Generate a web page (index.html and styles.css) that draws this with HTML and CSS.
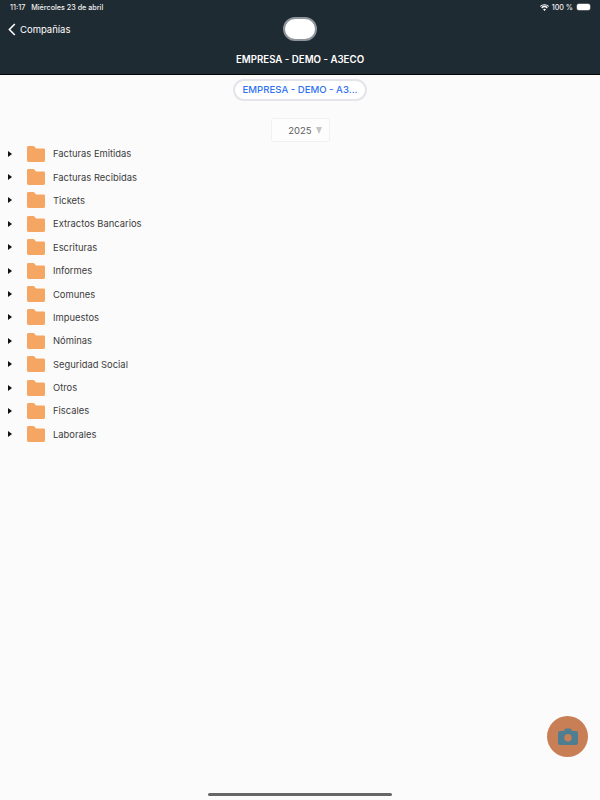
FILE: index.html
```html
<!DOCTYPE html>
<html lang="es">
<head>
    <meta charset="UTF-8">
    <meta name="viewport" content="width=device-width, initial-scale=1.0">
    <title>Compañías</title>
    <link rel="stylesheet" href="styles.css">
</head>
<body>
    <header class="topbar">
        <div class="status-bar">
            <span class="status-time">11:17</span>
            <span class="status-date">Miércoles 23 de abril</span>
            <span class="status-right">
                <svg class="wifi" width="9" height="7" viewBox="0 0 18 14"><path d="M9 14 L6 10.6 A4.6 4.6 0 0 1 12 10.6 Z M4.4 8.8 L2.5 6.7 A9.6 9.6 0 0 1 15.5 6.7 L13.6 8.8 A6.8 6.8 0 0 0 4.4 8.8 Z M1.3 5.4 L0 3.8 A13.4 13.4 0 0 1 18 3.8 L16.7 5.4 A11.4 11.4 0 0 0 1.3 5.4 Z" fill="#fff"/></svg>
                <span>100 %</span>
                <span class="battery"></span>
            </span>
        </div>
        <div class="nav-row">
            <a class="back-link">
                <svg width="8" height="13" viewBox="0 0 8 13"><path d="M6.8 1 L1.4 6.5 L6.8 12" fill="none" stroke="#fff" stroke-width="1.6"/></svg>
                <span>Compañías</span>
            </a>
            <div class="logo-pill"></div>
        </div>
        <h1 class="company-title">EMPRESA - DEMO - A3ECO</h1>
    </header>

    <main class="content">
        <div class="company-pill">EMPRESA - DEMO - A3...</div>
        <div class="year-select">
            <span>2025</span>
            <span class="year-arrow"></span>
        </div>
        <ul class="folder-list">
            <li class="folder-row"><span class="caret"></span><svg class="folder" viewBox="0 0 18 16"><use href="#folder-icon"/></svg><span>Facturas Emitidas</span></li>
            <li class="folder-row"><span class="caret"></span><svg class="folder" viewBox="0 0 18 16"><use href="#folder-icon"/></svg><span>Facturas Recibidas</span></li>
            <li class="folder-row"><span class="caret"></span><svg class="folder" viewBox="0 0 18 16"><use href="#folder-icon"/></svg><span>Tickets</span></li>
            <li class="folder-row"><span class="caret"></span><svg class="folder" viewBox="0 0 18 16"><use href="#folder-icon"/></svg><span>Extractos Bancarios</span></li>
            <li class="folder-row"><span class="caret"></span><svg class="folder" viewBox="0 0 18 16"><use href="#folder-icon"/></svg><span>Escrituras</span></li>
            <li class="folder-row"><span class="caret"></span><svg class="folder" viewBox="0 0 18 16"><use href="#folder-icon"/></svg><span>Informes</span></li>
            <li class="folder-row"><span class="caret"></span><svg class="folder" viewBox="0 0 18 16"><use href="#folder-icon"/></svg><span>Comunes</span></li>
            <li class="folder-row"><span class="caret"></span><svg class="folder" viewBox="0 0 18 16"><use href="#folder-icon"/></svg><span>Impuestos</span></li>
            <li class="folder-row"><span class="caret"></span><svg class="folder" viewBox="0 0 18 16"><use href="#folder-icon"/></svg><span>Nóminas</span></li>
            <li class="folder-row"><span class="caret"></span><svg class="folder" viewBox="0 0 18 16"><use href="#folder-icon"/></svg><span>Seguridad Social</span></li>
            <li class="folder-row"><span class="caret"></span><svg class="folder" viewBox="0 0 18 16"><use href="#folder-icon"/></svg><span>Otros</span></li>
            <li class="folder-row"><span class="caret"></span><svg class="folder" viewBox="0 0 18 16"><use href="#folder-icon"/></svg><span>Fiscales</span></li>
            <li class="folder-row"><span class="caret"></span><svg class="folder" viewBox="0 0 18 16"><use href="#folder-icon"/></svg><span>Laborales</span></li>
        </ul>
    </main>

    <button class="camera-fab">
        <svg width="20" height="17" viewBox="0 0 20 17"><path d="M2 3 H6 L7 0.8 Q7.2 0.4 7.8 0.4 H12.2 Q12.8 0.4 13 0.8 L14 3 H18 Q20 3 20 5 V15 Q20 17 18 17 H2 Q0 17 0 15 V5 Q0 3 2 3 Z" fill="#4f7d92"/><circle cx="10" cy="9.8" r="3.7" fill="#c97f55"/></svg>
    </button>
    <div class="home-indicator"></div>

    <svg width="0" height="0" class="icon-defs"><defs><path id="folder-icon" d="M1.4 0 H6.4 Q7 0 7.4 0.5 L9 2.4 H16.6 Q18 2.4 18 3.8 V14.6 Q18 16 16.6 16 H1.4 Q0 16 0 14.6 V1.4 Q0 0 1.4 0 Z" fill="#f5a662"/></defs></svg>
</body>
</html>
```

FILE: styles.css
```css
* {
    box-sizing: border-box;
}
html, body {
    height: 100%;
}
body {
    margin: 0;
    background: #fbfbfb;
    font-family: 'Inter', 'Liberation Sans', sans-serif;
    color: #3c3c3c;
    overflow: hidden;
}
.topbar {
    height: 75px;
    background: #1f2b32;
    border-bottom: 1px solid #050505;
    color: #fff;
    padding-top: 2px;
}
.status-bar {
    display: flex;
    align-items: center;
    height: 10px;
    padding: 0 10px 0 10px;
    font-size: 7.2px;
    font-weight: 500;
    color: #f0f0f0;
}
.status-date {
    margin-left: 6px;
}
.status-right {
    margin-left: auto;
    display: flex;
    align-items: center;
    gap: 3px;
}
.battery {
    width: 13px;
    height: 6px;
    margin-left: 1px;
    border-radius: 2px;
    background: #fff;
    box-shadow: 0 0 0 0.5px #8a9095;
}
.nav-row {
    position: relative;
    display: flex;
    align-items: flex-start;
    height: 34px;
    padding-left: 8px;
    margin-top: 5px;
}
.back-link {
    display: flex;
    align-items: center;
    gap: 4px;
    height: 24px;
    font-size: 9.5px;
    color: #fff;
}
.logo-pill {
    position: absolute;
    left: 283px;
    top: 0;
    width: 34px;
    height: 24px;
    border-radius: 12px;
    background: #fff;
    border: 2px solid #8f959b;
}
.company-title {
    margin: 0;
    margin-top: 3px;
    text-align: center;
    font-size: 9.7px;
    font-weight: 600;
    line-height: 12px;
}
.content {
    display: flex;
    flex-direction: column;
    align-items: center;
}
.company-pill {
    margin-top: 4px;
    width: 134px;
    height: 22px;
    border-radius: 11px;
    background: #fff;
    border: 2px solid #e4e4ea;
    color: #2f73f0;
    font-size: 9.6px;
    font-weight: 500;
    line-height: 18px;
    text-align: center;
    white-space: nowrap;
}
.year-select {
    margin-top: 17px;
    width: 59px;
    height: 24px;
    border: 1px solid #f1f1f1;
    border-radius: 3px;
    background: #fdfdfd;
    display: flex;
    align-items: center;
    justify-content: flex-end;
    gap: 4px;
    padding-right: 7px;
    font-size: 9.5px;
    color: #5e5e5e;
}
.year-arrow {
    width: 0;
    height: 0;
    border-left: 3px solid transparent;
    border-right: 3px solid transparent;
    border-top: 7px solid #c4c4c4;
}
.folder-list {
    list-style: none;
    align-self: stretch;
    margin: 0;
    padding: 0;
}
.folder-row {
    display: flex;
    align-items: center;
    height: 23.4px;
    font-size: 9.4px;
}
.caret {
    width: 0;
    height: 0;
    margin-left: 8px;
    border-top: 3px solid transparent;
    border-bottom: 3px solid transparent;
    border-left: 4px solid #111;
}
.folder {
    width: 18px;
    height: 16px;
    margin-left: 15px;
    margin-right: 8px;
}
.camera-fab {
    position: absolute;
    left: 547px;
    top: 716px;
    width: 41px;
    height: 41px;
    padding: 0;
    border: none;
    border-radius: 50%;
    background: #c97f55;
    display: flex;
    align-items: center;
    justify-content: center;
}
.home-indicator {
    position: absolute;
    left: 208px;
    top: 793px;
    width: 184px;
    height: 3px;
    border-radius: 2px;
    background: #666;
}
.icon-defs {
    position: absolute;
}
```
